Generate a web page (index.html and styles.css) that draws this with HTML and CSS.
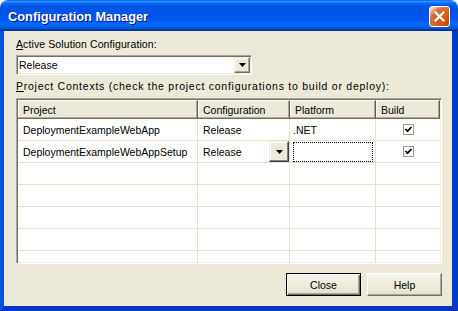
FILE: index.html
```html
<!DOCTYPE html>
<html lang="en">

<head>
    <meta charset="UTF-8" />
    <meta name="viewport" content="width=device-width, initial-scale=1.0" />
    <title>Configuration Manager</title>
    <link rel="stylesheet" href="styles.css">
</head>

<body>
    <div class="window">
        <div class="titlebar">
            <span class="title">Configuration Manager</span>
            <button class="close-x" aria-label="Close">
                <svg width="11" height="11" viewBox="0 0 11 11">
                    <path d="M1.5 1.5 L9.5 9.5 M9.5 1.5 L1.5 9.5" stroke="#fff" stroke-width="2.2" stroke-linecap="square" />
                </svg>
            </button>
        </div>

        <div class="content">
            <label class="caption"><u>A</u>ctive Solution Configuration:</label>
            <div class="combo">
                <span class="combo-text">Release</span>
                <span class="drop-btn">
                    <svg width="7" height="4" viewBox="0 0 7 4"><polygon points="0,0 7,0 3.5,4" fill="#000" /></svg>
                </span>
            </div>

            <label class="caption caption-grid"><u>P</u>roject Contexts (check the project configurations to build or deploy):</label>

            <div class="grid">
                <div class="row head">
                    <div class="cell">Project</div>
                    <div class="cell">Configuration</div>
                    <div class="cell">Platform</div>
                    <div class="cell">Build</div>
                </div>
                <div class="row">
                    <div class="cell">DeploymentExampleWebApp</div>
                    <div class="cell">Release</div>
                    <div class="cell plat">.NET</div>
                    <div class="cell check-cell"><span class="check">
                        <svg width="9" height="9" viewBox="0 0 9 9"><path d="M1.5 4 L3.5 6.2 L7.5 2" stroke="#000" stroke-width="1.7" fill="none" /></svg>
                    </span></div>
                </div>
                <div class="row">
                    <div class="cell">DeploymentExampleWebAppSetup</div>
                    <div class="cell edit-cell">
                        <span>Release</span>
                        <span class="cell-drop">
                            <svg width="7" height="4" viewBox="0 0 7 4"><polygon points="0,0 7,0 3.5,4" fill="#000" /></svg>
                        </span>
                    </div>
                    <div class="cell focus-cell"><span class="focus"></span></div>
                    <div class="cell check-cell"><span class="check">
                        <svg width="9" height="9" viewBox="0 0 9 9"><path d="M1.5 4 L3.5 6.2 L7.5 2" stroke="#000" stroke-width="1.7" fill="none" /></svg>
                    </span></div>
                </div>
                <div class="row"><div class="cell"></div><div class="cell"></div><div class="cell"></div><div class="cell"></div></div>
                <div class="row"><div class="cell"></div><div class="cell"></div><div class="cell"></div><div class="cell"></div></div>
                <div class="row"><div class="cell"></div><div class="cell"></div><div class="cell"></div><div class="cell"></div></div>
                <div class="row"><div class="cell"></div><div class="cell"></div><div class="cell"></div><div class="cell"></div></div>
                <div class="row"><div class="cell"></div><div class="cell"></div><div class="cell"></div><div class="cell"></div></div>
            </div>

            <div class="actions">
                <button class="btn default">Close</button>
                <button class="btn">Help</button>
            </div>
        </div>
    </div>
</body>

</html>
```

FILE: styles.css
```css
body {
    margin: 0;
    background: #fff;
    font-family: 'Liberation Sans', Arial, sans-serif;
    font-size: 10.5px;
    color: #000;
}

.window {
    width: 458px;
    height: 311px;
    display: flex;
    flex-direction: column;
}

.titlebar {
    height: 31px;
    flex: none;
    display: flex;
    align-items: center;
    justify-content: space-between;
    padding: 0 8px 0 8px;
    box-sizing: border-box;
    border-radius: 8px 8px 0 0;
    background: linear-gradient(to bottom, #0058ee 0%, #3593ff 4%, #288eff 6%, #127dff 8%, #036ffc 10%, #0262ee 14%, #0057e5 20%, #0054e3 24%, #0055eb 56%, #005bf5 66%, #026afe 76%, #0062ef 86%, #0052d6 92%, #0040ab 94%, #003092 100%);
}

.title {
    color: #fff;
    font-weight: bold;
    font-size: 12.8px;
    text-shadow: 1px 1px #0f1089;
    margin-top: 1px;
}

.close-x {
    width: 21px;
    height: 21px;
    padding: 0;
    margin-top: 2px;
    border: 1px solid #fff;
    border-radius: 3px;
    display: flex;
    align-items: center;
    justify-content: center;
    background: radial-gradient(circle at 90% 90%, #cc4600 0%, #dc6527 55%, #cd7546 70%, #ffccb2 90%, #fff 100%);
}

.content {
    flex: 1;
    background: #ece9d8;
    border-style: solid;
    border-color: #0855dd #0339c9 #0336c4 #0855dd;
    border-width: 0 6px 5px 4px;
    padding: 7px 10px 0 12px;
    display: flex;
    flex-direction: column;
    align-items: flex-start;
}

.caption {
    display: block;
    line-height: 13px;
    letter-spacing: 0.1px;
}

.caption-grid {
    margin-top: 5px;
    letter-spacing: 0.75px;
}

.combo {
    margin-top: 4px;
    width: 236px;
    height: 20px;
    box-sizing: border-box;
    background: #fff;
    border: 1px solid;
    border-color: #aca899 #fff #fff #aca899;
    box-shadow: inset 1px 1px #716f64, inset -1px -1px #f1efe2;
    display: flex;
    align-items: stretch;
    padding: 1px 1px 1px 2px;
}

.combo-text {
    flex: 1;
    line-height: 16px;
}

.drop-btn,
.cell-drop {
    width: 16px;
    display: flex;
    align-items: center;
    justify-content: center;
    background: #ece9d8;
    box-sizing: border-box;
    border: 1px solid;
    border-color: #f1efe2 #716f64 #716f64 #f1efe2;
    box-shadow: inset -1px -1px #aca899, inset 1px 1px #fff;
}

.grid {
    margin-top: 5px;
    width: 426px;
    height: 166px;
    box-sizing: border-box;
    background: #fff;
    border: 1px solid;
    border-color: #aca899 #fff #fff #aca899;
    box-shadow: inset 1px 1px #716f64, inset -1px -1px #f1efe2;
    padding: 1px;
    overflow: hidden;
}

.row {
    display: grid;
    grid-template-columns: 180px 92px 86px 64px;
    height: 22px;
}

.cell {
    box-sizing: border-box;
    border-right: 1px solid #e8e0cb;
    border-bottom: 1px solid #e8e0cb;
    padding-left: 5px;
    display: flex;
    align-items: center;
    white-space: nowrap;
}

.row .cell:last-child {
    border-right: none;
}

.head {
    height: 19px;
}

.head .cell {
    background: #ece9d8;
    border-top: 1px solid #fff;
    border-right: 1px solid #5e5c52;
    border-bottom: 1px solid #716f64;
    box-shadow: inset -1px -1px #aca899, inset 1px 0 #fff;
    padding-left: 5px;
}

.head .cell:last-child {
    border-right: 1px solid #5e5c52;
}

.plat {
    padding-left: 3px;
}

.edit-cell {
    align-items: stretch;
    padding-right: 0;
}

.edit-cell span:first-child {
    flex: 1;
    display: flex;
    align-items: center;
}

.cell-drop {
    width: 20px;
    border-color: #f1efe2 #404040 #404040 #f1efe2;
    box-shadow: inset -1px -1px #808080, inset 1px 1px #fff;
}

.focus-cell {
    padding: 1px 2px 0 3px;
    align-items: stretch;
}

.focus {
    flex: 1;
    border: 1px dotted #000;
}

.check-cell {
    justify-content: center;
    padding-left: 0;
}

.check {
    width: 11px;
    height: 11px;
    box-sizing: border-box;
    border: 1px solid #9a9a92;
    background: #fff;
    display: flex;
    align-items: center;
    justify-content: center;
}

.actions {
    margin-top: 9px;
    align-self: stretch;
    display: flex;
    justify-content: flex-end;
    gap: 6px;
}

.btn {
    width: 75px;
    height: 23px;
    font-family: inherit;
    font-size: 10.5px;
    font-weight: normal;
    color: #000;
    background: linear-gradient(#f6f4ec, #ece9d8 70%, #e2ded0);
    border: 1px solid;
    border-color: #fff #716f64 #716f64 #fff;
    box-shadow: inset -1px -1px #aca899;
    padding: 0;
}

.btn.default {
    border: 1px solid #000;
    box-shadow: inset 1px 1px #fff, inset -1px -1px #716f64, inset -2px -2px #aca899;
}
```
